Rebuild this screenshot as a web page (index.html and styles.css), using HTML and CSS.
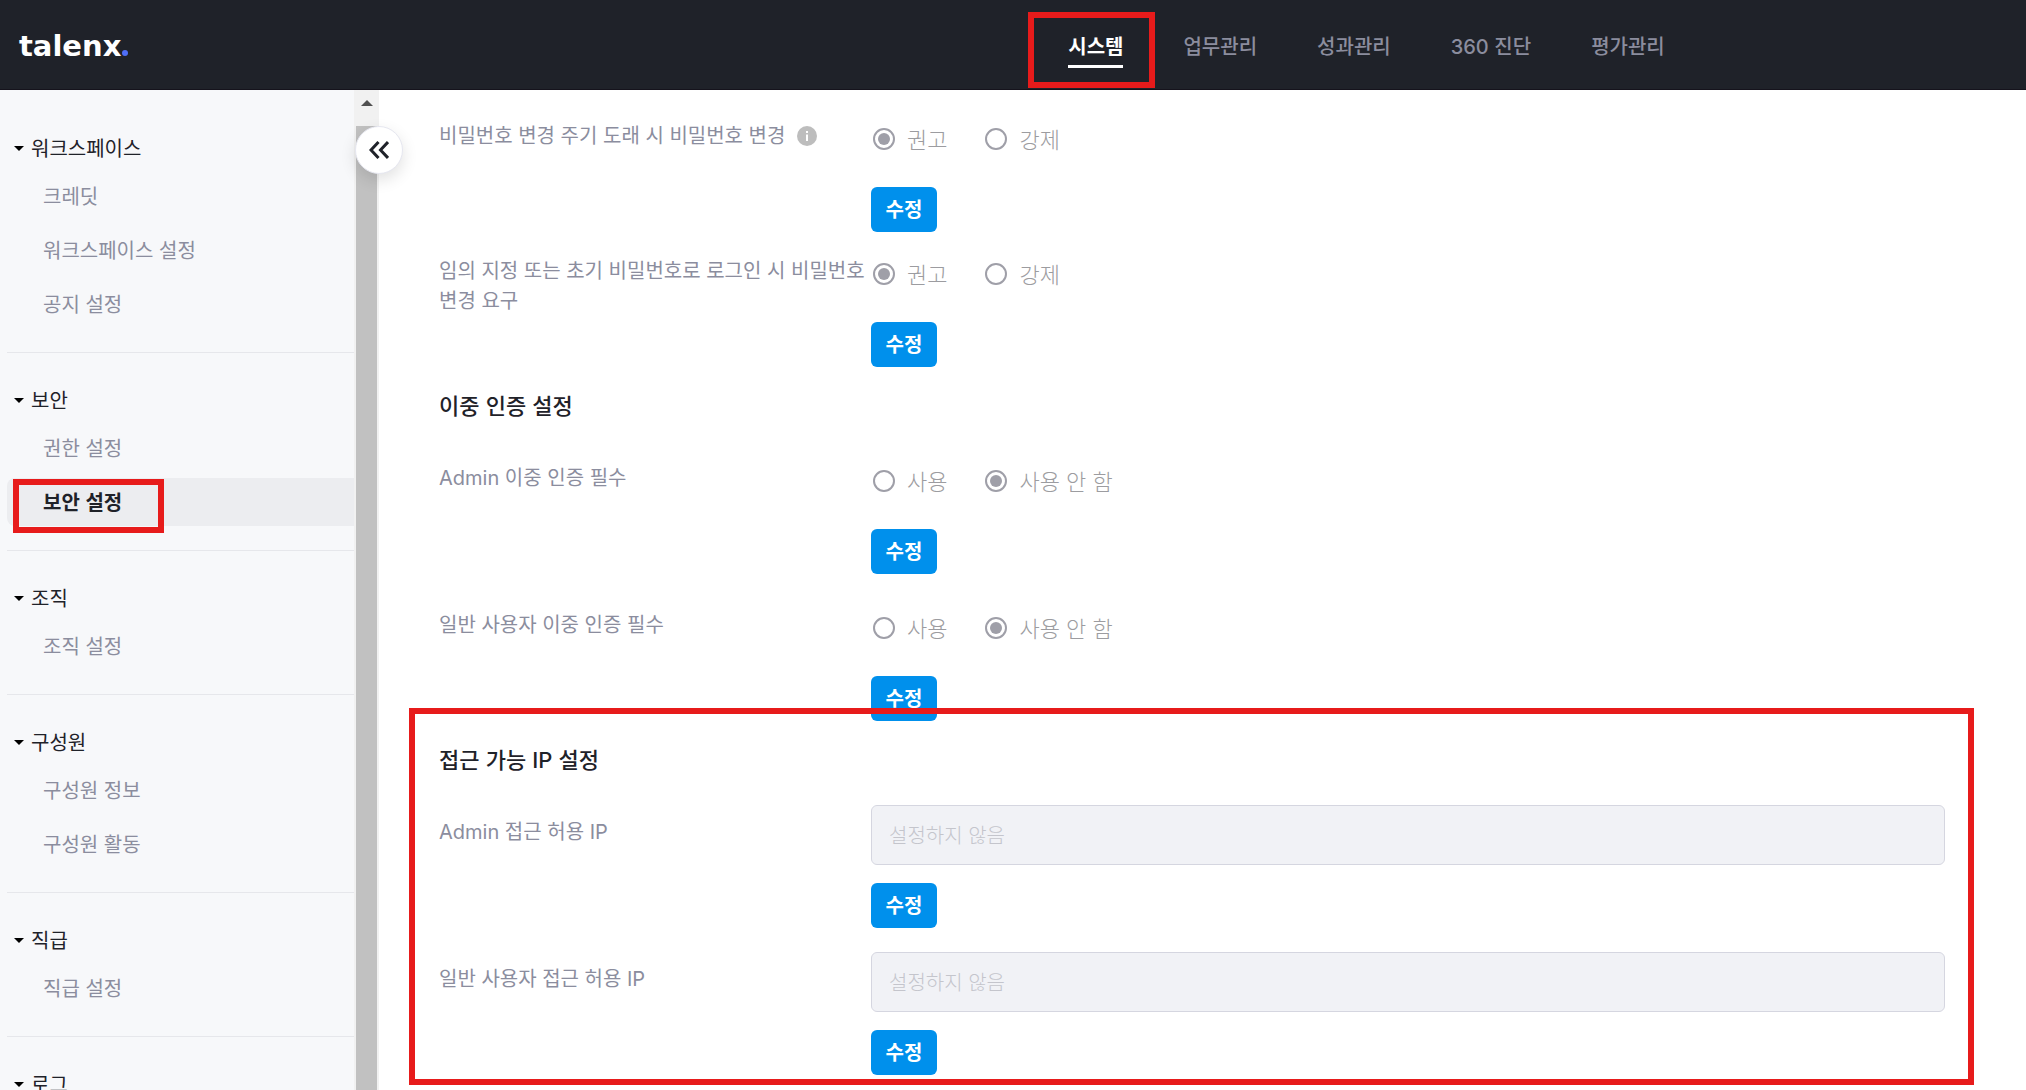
FILE: index.html
```html
<!DOCTYPE html>
<html lang="ko">
<head>
  <meta charset="utf-8">
  <meta name="viewport" content="width=device-width, initial-scale=1">
  <title>talenx - 보안 설정</title>
  <link rel="stylesheet" href="styles.css">
</head>
<body>
  <header class="topbar">
    <a class="logo" href="#">talenx<span class="logo-dot"></span></a>
    <nav class="topnav">
      <a class="topnav-link is-active" href="#">시스템</a>
      <a class="topnav-link" href="#">업무관리</a>
      <a class="topnav-link" href="#">성과관리</a>
      <a class="topnav-link" href="#"><span class="latin">360</span> 진단</a>
      <a class="topnav-link" href="#">평가관리</a>
    </nav>
  </header>

  <div class="layout">
    <aside class="sidebar">
      <nav class="menu">
        <section class="group">
          <h2 class="group-title"><svg class="caret" viewBox="0 0 10 5"><path d="M0 0h10L5 5z"/></svg>워크스페이스</h2>
          <ul class="items">
            <li><a class="item" href="#">크레딧</a></li>
            <li><a class="item" href="#">워크스페이스 설정</a></li>
            <li><a class="item" href="#">공지 설정</a></li>
          </ul>
        </section>
        <section class="group">
          <h2 class="group-title"><svg class="caret" viewBox="0 0 10 5"><path d="M0 0h10L5 5z"/></svg>보안</h2>
          <ul class="items">
            <li><a class="item" href="#">권한 설정</a></li>
            <li><a class="item is-active" href="#">보안 설정</a></li>
          </ul>
        </section>
        <section class="group">
          <h2 class="group-title"><svg class="caret" viewBox="0 0 10 5"><path d="M0 0h10L5 5z"/></svg>조직</h2>
          <ul class="items">
            <li><a class="item" href="#">조직 설정</a></li>
          </ul>
        </section>
        <section class="group">
          <h2 class="group-title"><svg class="caret" viewBox="0 0 10 5"><path d="M0 0h10L5 5z"/></svg>구성원</h2>
          <ul class="items">
            <li><a class="item" href="#">구성원 정보</a></li>
            <li><a class="item" href="#">구성원 활동</a></li>
          </ul>
        </section>
        <section class="group">
          <h2 class="group-title"><svg class="caret" viewBox="0 0 10 5"><path d="M0 0h10L5 5z"/></svg>직급</h2>
          <ul class="items">
            <li><a class="item" href="#">직급 설정</a></li>
          </ul>
        </section>
        <section class="group">
          <h2 class="group-title"><svg class="caret" viewBox="0 0 10 5"><path d="M0 0h10L5 5z"/></svg>로그</h2>
        </section>
      </nav>
      <div class="scrollbar">
        <svg class="scroll-up" viewBox="0 0 12 6"><path d="M6 0l6 6H0z"/></svg>
        <div class="scroll-thumb"></div>
      </div>
      <button class="collapse" type="button" aria-label="메뉴 접기">
        <svg viewBox="0 0 20 18"><path d="M9.500 1L2 9l7.500 8M19 1l-7.500 8L19 17"/></svg>
      </button>
    </aside>

    <main class="content">
      <section class="panel rows-tight">
        <div class="row">
          <div class="label" id="lb-cycle">비밀번호 변경 주기 도래 시 비밀번호 변경
            <svg class="info" viewBox="0 0 20 20"><circle cx="10" cy="10" r="10"/><path d="M9 5h2v2H9zM9 8.500h2V15H9z"/></svg>
          </div>
          <div class="field">
            <div class="radios" role="radiogroup" aria-labelledby="lb-cycle">
              <label class="radio"><input type="radio" name="cycle" checked disabled><span class="radio-text">권고</span></label>
              <label class="radio"><input type="radio" name="cycle" disabled><span class="radio-text">강제</span></label>
            </div>
            <button class="edit" type="button">수정</button>
          </div>
        </div>
        <div class="row">
          <div class="label" id="lb-initial">임의 지정 또는 초기 비밀번호로 로그인 시 비밀번호 변경 요구</div>
          <div class="field">
            <div class="radios" role="radiogroup" aria-labelledby="lb-initial">
              <label class="radio"><input type="radio" name="initial" checked disabled><span class="radio-text">권고</span></label>
              <label class="radio"><input type="radio" name="initial" disabled><span class="radio-text">강제</span></label>
            </div>
            <button class="edit" type="button">수정</button>
          </div>
        </div>
      </section>

      <section class="panel">
        <h1 class="panel-title">이중 인증 설정</h1>
        <div class="row">
          <div class="label" id="lb-admin2fa"><span class="latin">Admin</span> 이중 인증 필수</div>
          <div class="field">
            <div class="radios" role="radiogroup" aria-labelledby="lb-admin2fa">
              <label class="radio"><input type="radio" name="admin2fa" disabled><span class="radio-text">사용</span></label>
              <label class="radio"><input type="radio" name="admin2fa" checked disabled><span class="radio-text">사용 안 함</span></label>
            </div>
            <button class="edit" type="button">수정</button>
          </div>
        </div>
        <div class="row">
          <div class="label" id="lb-user2fa">일반 사용자 이중 인증 필수</div>
          <div class="field">
            <div class="radios" role="radiogroup" aria-labelledby="lb-user2fa">
              <label class="radio"><input type="radio" name="user2fa" disabled><span class="radio-text">사용</span></label>
              <label class="radio"><input type="radio" name="user2fa" checked disabled><span class="radio-text">사용 안 함</span></label>
            </div>
            <button class="edit" type="button">수정</button>
          </div>
        </div>
      </section>

      <section class="panel is-marked">
        <h1 class="panel-title">접근 가능 <span class="latin">IP</span> 설정</h1>
        <div class="row">
          <label class="label" for="admin-ip"><span class="latin">Admin</span> 접근 허용 <span class="latin">IP</span></label>
          <div class="field">
            <input class="text" id="admin-ip" type="text" placeholder="설정하지 않음" disabled>
            <button class="edit" type="button">수정</button>
          </div>
        </div>
        <div class="row">
          <label class="label" for="user-ip">일반 사용자 접근 허용 <span class="latin">IP</span></label>
          <div class="field">
            <input class="text" id="user-ip" type="text" placeholder="설정하지 않음" disabled>
            <button class="edit" type="button">수정</button>
          </div>
        </div>
      </section>
    </main>
  </div>
</body>
</html>
```
FILE: styles.css
```css
*,
*::before,
*::after {
  box-sizing: border-box;
}

body {
  margin: 0;
  height: 100vh;
  display: flex;
  flex-direction: column;
  overflow: hidden;
  background: #fff;
  color: #1f2229;
  font-family: "Noto Sans CJK KR", sans-serif;
  font-size: 20px;
  line-height: 30px;
}

a {
  color: inherit;
  text-decoration: none;
}

button,
input {
  font: inherit;
}

.latin {
  font-family: Inter, sans-serif;
  line-height: 1;
}

/* Top bar */
.topbar {
  flex: none;
  display: flex;
  align-items: center;
  height: 90px;
  padding: 2px 0 0 19px;
  background: #1f2229;
  border-bottom: 1px solid #15131c;
}

.logo {
  display: flex;
  align-items: baseline;
  color: #fff;
  font-family: "DejaVu Sans", sans-serif;
  font-size: 29px;
  font-weight: 700;
}

.logo-dot {
  width: 6px;
  height: 6px;
  margin-left: 1px;
  border-radius: 50%;
  background: #4f6ef7;
}

.topnav {
  display: flex;
  gap: 60px;
  margin-left: auto;
  margin-right: 18%;
  color: #8b8d9e;
  font-weight: 500;
}

.topnav-link.is-active {
  position: relative;
  color: #fff;
  font-weight: 700;
}

.topnav-link.is-active::before {
  content: "";
  position: absolute;
  inset: 34px 0 auto;
  height: 3px;
  background: #fff;
}

.topnav-link.is-active::after {
  content: "";
  position: absolute;
  inset: -19px -32px -27px -40px;
  border: 6px solid #e71b1b;
}

/* Sidebar */
.layout {
  flex: 1;
  min-height: 0;
  display: flex;
}

.sidebar {
  position: relative;
  flex: none;
  display: flex;
  width: 379px;
  background: #f7f8fa;
}

.menu {
  flex: 1;
  overflow: hidden;
  padding: 11px 0 0 7px;
}

.group {
  padding: 23px 0 24px;
}

.group + .group {
  border-top: 1px solid #e6e7eb;
}

.group-title {
  display: flex;
  align-items: center;
  gap: 7px;
  height: 48px;
  margin: 0;
  padding-left: 7px;
  font-size: 20px;
  font-weight: 400;
}

.caret {
  width: 10px;
  height: 5px;
}

.items {
  display: grid;
  gap: 6px;
  margin: 0;
  padding: 0;
  list-style: none;
}

.item {
  display: flex;
  align-items: center;
  height: 48px;
  padding-left: 36px;
  border-radius: 8px 0 0 8px;
  color: #8b8d9e;
}

.item.is-active {
  position: relative;
  background: #ecedf0;
  color: #1f2229;
  font-weight: 700;
}

.item.is-active::after {
  content: "";
  position: absolute;
  top: 1px;
  left: 6px;
  width: 151px;
  height: 54px;
  border: 6px solid #e71b1b;
}

.scrollbar {
  display: flex;
  flex-direction: column;
  align-items: center;
  gap: 20px;
  width: 25px;
  padding-top: 10px;
  background: #f1f1f1;
}

.scroll-up {
  flex: none;
  width: 12px;
  height: 6px;
  fill: #505050;
}

.scroll-thumb {
  flex: 1;
  width: 21px;
  background: #c1c1c1;
}

.collapse {
  position: absolute;
  top: 36px;
  right: -24px;
  display: grid;
  place-items: center;
  width: 48px;
  height: 48px;
  padding: 0;
  border: 1px solid #e6e7f0;
  border-radius: 50%;
  background: #fff;
  box-shadow: 0 6px 16px rgba(0, 0, 0, 0.12);
}

.collapse svg {
  width: 20px;
  height: 18px;
  fill: none;
  stroke: #1f2229;
  stroke-width: 3;
}

/* Settings */
.content {
  flex: 1;
  min-width: 0;
  padding: 19px 81px 0 60px;
}

.panel {
  display: grid;
  gap: 24px;
}

.rows-tight {
  gap: 12px;
}

.panel-title {
  margin: 0;
  padding: 19px 0 5px;
  font-size: 22px;
  font-weight: 500;
  line-height: 36px;
}

.row {
  display: grid;
  grid-template-columns: 432px 1fr;
}

.label {
  padding-top: 11px;
  color: #8b8d9e;
  word-break: keep-all;
}

.info {
  width: 20px;
  height: 20px;
  margin-left: 6px;
  vertical-align: -3px;
  fill: #bdbdbd;
}

.info path {
  fill: #fff;
}

.field {
  display: grid;
  justify-items: start;
  gap: 18px;
}

.radios {
  display: flex;
  gap: 38px;
  height: 60px;
  padding-left: 2px;
}

.radio {
  display: flex;
  align-items: center;
  gap: 12px;
  color: #9c9ca0;
  font-size: 22px;
  font-weight: 300;
}

.radio-text {
  padding-bottom: 3px;
}

.radio input {
  appearance: none;
  display: grid;
  place-items: center;
  width: 22px;
  height: 22px;
  margin: 0;
  border: 2px solid #9f9fa8;
  border-radius: 50%;
}

.radio input:checked::before {
  content: "";
  width: 12px;
  height: 12px;
  border-radius: 50%;
  background: #9f9fa8;
}

.edit {
  width: 66px;
  height: 45px;
  padding: 0 0 2px;
  border: 0;
  border-radius: 6px;
  background: #0090ec;
  color: #fff;
  font-weight: 700;
}

.text {
  width: 100%;
  height: 60px;
  padding: 0 17px 1px;
  border: 1px solid #d5d6e0;
  border-radius: 6px;
  background: #f1f2f6;
}

.text::placeholder {
  color: #c4c5cc;
  font-weight: 300;
  opacity: 1;
}

.is-marked {
  position: relative;
}

.is-marked::after {
  content: "";
  position: absolute;
  inset: -13px -29px -10px -30px;
  border: 6px solid #e71b1b;
  pointer-events: none;
}
```
